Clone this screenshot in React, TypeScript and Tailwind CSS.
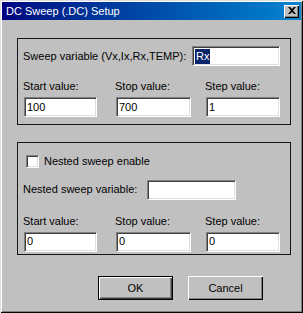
const sunken =
  "bg-white border border-t-[#808080] border-l-[#808080] border-b-white border-r-white shadow-[inset_1px_1px_0_#404040,inset_-1px_-1px_0_#dfdfdf]";

function TextBox({ value, className }: { value?: string; className: string }) {
  return (
    <div className={`${sunken} ${className} h-[20px] flex items-center pl-[2px] text-black`}>
      {value}
    </div>
  );
}

function ValueRow({ values }: { values: string[] }) {
  const cols = [
    { w: "w-[92px]", input: "w-[73px]" },
    { w: "w-[90px]", input: "w-[75px]" },
    { w: "w-[74px]", input: "w-[74px]" },
  ];
  const labels = ["Start value:", "Stop value:", "Step value:"];
  return (
    <div className="flex pl-[6px]">
      {cols.map((c, i) => (
        <div key={i} className={c.w}>
          <div className="h-[14px] leading-[14px] -ml-[1px]">{labels[i]}</div>
          <TextBox value={values[i]} className={`${c.input} mt-[4px]`} />
        </div>
      ))}
    </div>
  );
}

function CloseButton() {
  return (
    <div className="w-[15px] h-[13px] bg-[#c0c0c0] flex items-center justify-center shadow-[inset_1px_1px_0_#fff,inset_-1px_-1px_0_#000,inset_-2px_-2px_0_#808080]">
      <svg width="8" height="7" viewBox="0 0 8 7" className="mt-[-1px]">
        <path d="M0 0h2l2 2 2-2h2L5 3.5 8 7H6L4 5 2 7H0l3-3.5z" fill="#000" />
      </svg>
    </div>
  );
}

function Button({ label, isDefault }: { label: string; isDefault?: boolean }) {
  return (
    <div
      className={`w-[75px] h-[24px] flex items-center justify-center bg-[#c0c0c0] ${
        isDefault
          ? "border border-black shadow-[inset_1px_1px_0_#fff,inset_-1px_-1px_0_#404040,inset_-2px_-2px_0_#808080]"
          : "shadow-[inset_1px_1px_0_#fff,inset_-1px_-1px_0_#000,inset_-2px_-2px_0_#808080]"
      }`}
    >
      {label}
    </div>
  );
}

export default function App() {
  return (
    <div
      className="w-[303px] h-[313px] bg-[#c0c0c0] pt-[2px] px-[2px] text-[11px] text-black shadow-[inset_1px_1px_0_#dfdfdf,inset_-1px_-1px_0_#000,inset_2px_2px_0_#fff,inset_-2px_-2px_0_#808080]"
      style={{ fontFamily: '"Liberation Sans", Arial, sans-serif' }}
    >
      {/* title bar */}
      <div className="h-[18px] flex items-center bg-gradient-to-r from-[#000080] to-[#1084d0] pl-[4px] pr-[2px]">
        <span className="text-white text-[11px] leading-none">DC Sweep (.DC) Setup</span>
        <div className="ml-auto">
          <CloseButton />
        </div>
      </div>

      {/* sweep group */}
      <div className="ml-[15px] mt-[18px] w-[274px] h-[87px] border border-[#141414] pt-[7px]">
        <div className="flex items-center h-[20px]">
          <span className="pl-[5px]">Sweep variable (Vx,Ix,Rx,TEMP):</span>
          <div className={`${sunken} ml-auto mr-[10px] w-[88px] h-[20px] flex items-center pl-[2px]`}>
            <span className="bg-[#0a246a] text-white px-[1px] leading-[15px]">Rx</span>
          </div>
        </div>
        <div className="mt-[13px]">
          <ValueRow values={["100", "700", "1"]} />
        </div>
      </div>

      {/* nested sweep group */}
      <div className="ml-[15px] mt-[17px] w-[274px] h-[113px] border border-[#141414] pt-[10px]">
        <div className="flex items-center pl-[8px]">
          <div className={`${sunken} w-[13px] h-[13px]`} />
          <span className="ml-[5px]">Nested sweep enable</span>
        </div>
        <div className="flex items-center mt-[10px]">
          <span className="pl-[5px] w-[129px]">Nested sweep variable:</span>
          <TextBox className="w-[89px]" />
        </div>
        <div className="mt-[14px]">
          <ValueRow values={["0", "0", "0"]} />
        </div>
      </div>

      {/* buttons */}
      <div className="flex mt-[21px] pl-[96px] gap-[15px]">
        <Button label="OK" isDefault />
        <Button label="Cancel" />
      </div>
    </div>
  );
}
